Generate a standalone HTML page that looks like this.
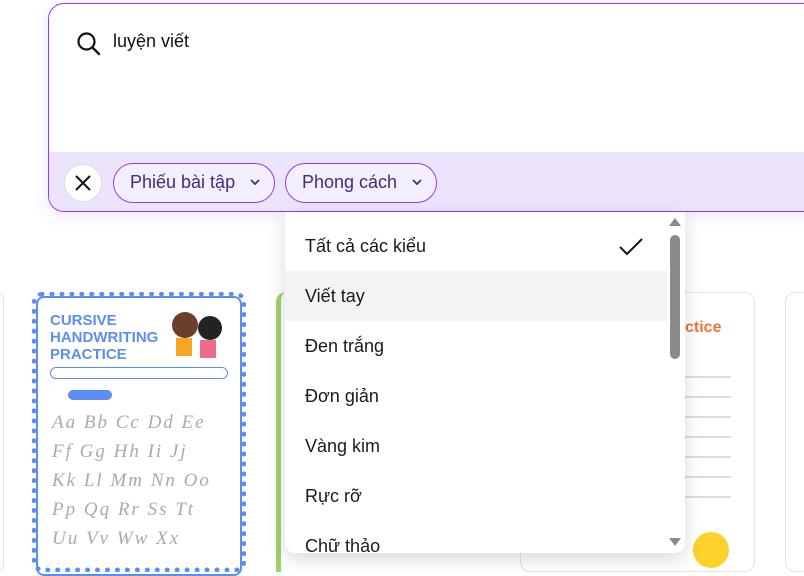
<!DOCTYPE html>
<html><head><meta charset="utf-8"><style>
*{margin:0;padding:0;box-sizing:border-box}
body{width:804px;height:561px;overflow:hidden;background:#fff;font-family:"Liberation Sans","DejaVu Sans",sans-serif;position:relative}
.abs{position:absolute}
.search{left:48px;top:3px;width:800px;height:209px;border:1.5px solid #8b3dff;border-radius:16px;overflow:hidden;background:#fff;box-shadow:0 4px 16px rgba(100,60,200,.12)}
.band{position:absolute;left:0;right:0;top:148px;bottom:0;background:#ece3fd}
.chip{position:absolute;top:159px;height:40px;border:1.5px solid #8b3dff;border-radius:20px;background:#f4efff;color:#3f2d78;font-size:18px;line-height:37px;padding-left:16px}
.chip svg{position:absolute;right:14px;top:15px}
.item{position:absolute;left:0;width:382px;height:50px;font-size:18px;color:#1a1a1a;line-height:50px;padding-left:20px}
</style></head><body>
<div class="abs" style="left:-10px;top:292px;width:14px;height:280px;border:1px solid #e3e3e3;border-radius:10px"></div>
<div class="abs" style="left:32px;top:292px;width:214px;height:280px;border:5px dotted #5b8ef0;border-radius:10px;background:#fff"></div>
<div class="abs" style="left:36px;top:296px;width:206px;height:280px;border:2px solid #5b8ef0;border-radius:8px"></div>
<div class="abs" style="left:50px;top:312px;font-weight:900;color:#5b8ef0;font-size:15px;line-height:17px">CURSIVE<br>HANDWRITING<br>PRACTICE</div>
<div class="abs" style="left:50px;top:367px;width:178px;height:12px;border:1px solid #5b8ef0;border-radius:6px"></div>
<div class="abs" style="left:68px;top:390px;width:44px;height:10px;background:#5b8ef0;border-radius:5px"></div>
<div class="abs" style="left:52px;top:408px;font-family:'Liberation Serif',serif;font-style:italic;color:#aaa;font-size:19px;line-height:29px;letter-spacing:2px">Aa Bb Cc Dd Ee<br>Ff Gg Hh Ii Jj<br>Kk Ll Mm Nn Oo<br>Pp Qq Rr Ss Tt<br>Uu Vv Ww Xx</div>
<div class="abs" style="left:172px;top:312px;width:26px;height:26px;border-radius:50%;background:#6b3f2a"></div>
<div class="abs" style="left:198px;top:316px;width:24px;height:24px;border-radius:50%;background:#222"></div>
<div class="abs" style="left:176px;top:338px;width:16px;height:18px;background:#f5a623"></div>
<div class="abs" style="left:200px;top:340px;width:16px;height:18px;background:#f06b8a"></div>
<div class="abs" style="left:276px;top:292px;width:20px;height:280px;border-left:5px solid #9fd16c;border-radius:10px 0 0 0"></div>
<div class="abs" style="left:520px;top:292px;width:235px;height:280px;border:1px solid #e3e3e3;border-radius:10px;background:#fff"></div>
<div class="abs" style="left:685px;top:319px;color:#f4733a;font-weight:bold;font-size:16px">ctice</div>
<div class="abs" style="left:685px;top:358px;width:46px;height:150px;background:repeating-linear-gradient(#fff 0 18px,#ddd 18px 20px)"></div>
<div class="abs" style="left:693px;top:532px;width:36px;height:36px;border-radius:50%;background:#fcd22a"></div>
<div class="abs" style="left:785px;top:292px;width:40px;height:280px;border:1px solid #e3e3e3;border-radius:10px"></div>
<div class="abs search">
 <svg class="abs" style="left:27px;top:27px" width="26" height="26" viewBox="0 0 26 26"><circle cx="10.5" cy="10.5" r="8" fill="none" stroke="#111" stroke-width="2.2"/><path d="M16.5 16.5L23 23" stroke="#111" stroke-width="2.4" stroke-linecap="round"/></svg>
 <div class="abs" style="left:64px;top:27px;font-size:18px;color:#111">luyện viết</div>
 <div class="band"></div>
 <div class="abs" style="left:15px;top:160px;width:38px;height:38px;border-radius:50%;background:#fff;border:1px solid #ddd"></div>
 <svg class="abs" style="left:24px;top:169px" width="20" height="20"><path d="M3 3L17 17M17 3L3 17" stroke="#111" stroke-width="2"/></svg>
 <div class="chip" style="left:64px;width:162px">Phiếu bài tập<svg width="10" height="7"><path d="M1 1L5 5L9 1" fill="none" stroke="#3f2d78" stroke-width="1.8"/></svg></div>
 <div class="chip" style="left:236px;width:152px">Phong cách<svg width="10" height="7"><path d="M1 1L5 5L9 1" fill="none" stroke="#3f2d78" stroke-width="1.8"/></svg></div>
</div>
<div class="abs" style="left:285px;top:212px;width:400px;height:341px;background:#fff;border-radius:0 0 10px 10px;box-shadow:0 6px 18px rgba(0,0,0,.15);overflow:hidden">
 <div class="item" style="top:9px">Tất cả các kiểu</div>
 <svg class="abs" style="left:333px;top:24px" width="26" height="22"><path d="M2 11L9 18L24 3" fill="none" stroke="#111" stroke-width="2"/></svg>
 <div class="item" style="top:59px;background:#f2f3f5">Viết tay</div>
 <div class="item" style="top:109px">Đen trắng</div>
 <div class="item" style="top:159px">Đơn giản</div>
 <div class="item" style="top:209px">Vàng kim</div>
 <div class="item" style="top:259px">Rực rỡ</div>
 <div class="item" style="top:309px">Chữ thảo</div>
 <div class="abs" style="left:385px;top:23px;width:10px;height:124px;background:#8a8a8a;border-radius:5px"></div>
 <div class="abs" style="left:384px;top:6px;width:0;height:0;border-left:6px solid transparent;border-right:6px solid transparent;border-bottom:8px solid #8a8a8a"></div>
 <div class="abs" style="left:384px;top:326px;width:0;height:0;border-left:6px solid transparent;border-right:6px solid transparent;border-top:8px solid #8a8a8a"></div>
</div>
</body></html>
